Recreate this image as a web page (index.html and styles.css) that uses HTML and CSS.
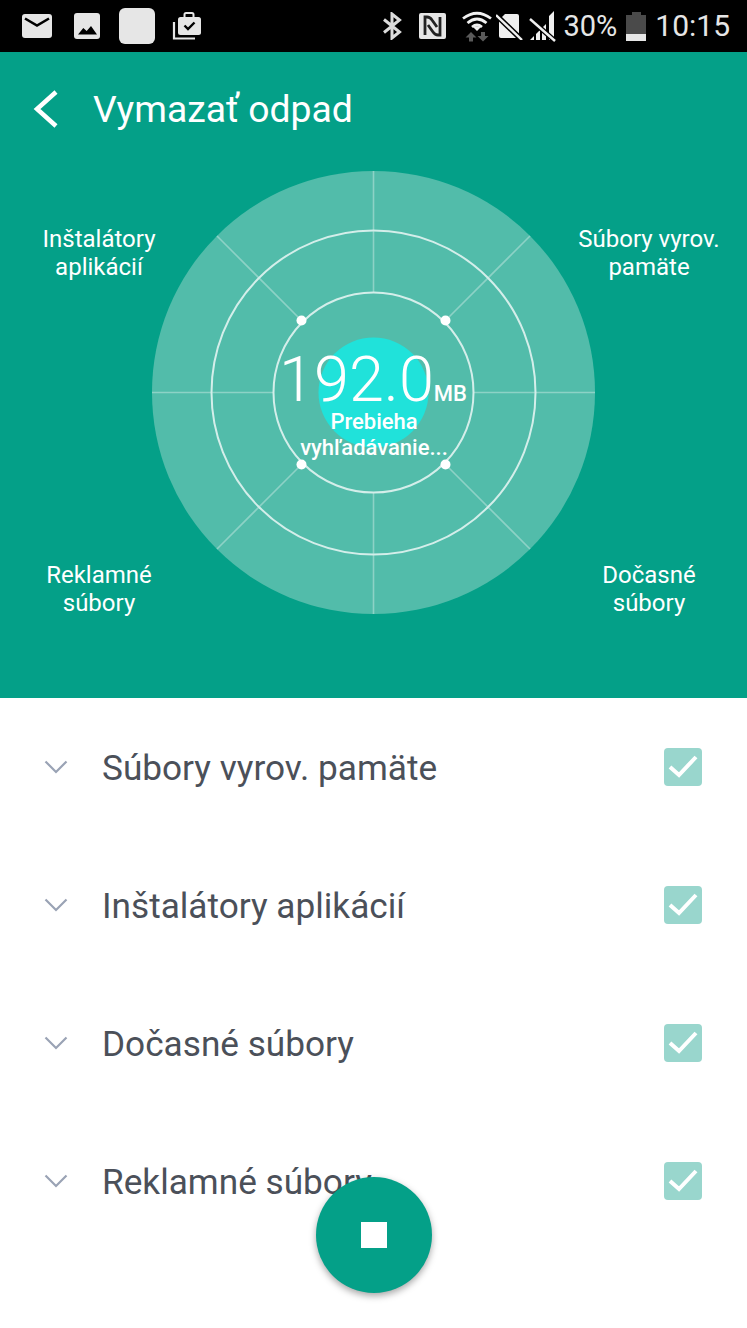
FILE: index.html
```html
<!DOCTYPE html>
<html lang="sk">
<head>
    <meta charset="UTF-8">
    <meta name="viewport" content="width=device-width, initial-scale=1.0">
    <title>Vymazať odpad</title>
    <link rel="stylesheet" href="styles.css">
</head>
<body>
    <!-- Status bar -->
    <div class="status-bar">
        <div class="status-left">
            <svg class="icon-mail" width="30" height="24" viewBox="0 0 30 24">
                <rect width="30" height="24" rx="3" fill="#e6e6e6"/>
                <path d="M3 4.500 L15 11.500 L27 4.500" fill="none" stroke="#000" stroke-width="2.600"/>
            </svg>
            <svg class="icon-photo" width="26" height="26" viewBox="0 0 26 26">
                <rect width="26" height="26" rx="3" fill="#e6e6e6"/>
                <path d="M4 21.500 L9.300 15 L12.700 18 L17 13 L23 21.500 Z" fill="#000"/>
            </svg>
            <div class="icon-blank"></div>
            <svg class="icon-work" width="31" height="31" viewBox="0 0 31 31">
                <path d="M2 11 V27.500 H23" fill="none" stroke="#e6e6e6" stroke-width="2.200"/>
                <path d="M12.500 6 V3.500 Q12.500 2 14 2 H20 Q21.500 2 21.500 3.500 V6" fill="none" stroke="#e6e6e6" stroke-width="2"/>
                <rect x="6" y="6" width="23" height="18" rx="2.500" fill="#e6e6e6"/>
                <path d="M12.500 14.500 L16 18 L22.500 11.500" fill="none" stroke="#000" stroke-width="2.400"/>
            </svg>
        </div>
        <div class="status-right">
            <svg class="icon-bt" width="20" height="28" viewBox="0 0 20 28">
                <path d="M2 7.500 L17.500 20 L10 26 V2 L17.500 8 L2 20.500" fill="none" stroke="#dcdcdc" stroke-width="3"/>
            </svg>
            <svg class="icon-nfc" width="27" height="26" viewBox="0 0 27 26">
                <rect width="27" height="26" rx="2" fill="#e6e6e6"/>
                <path d="M6 22 V4 H8 Q11 4 13 7 L18 14 M21 4 V22 H19 Q16 22 14 19 L9 12" fill="none" stroke="#222" stroke-width="2.800"/>
            </svg>
            <svg class="icon-wifi" width="30" height="31" viewBox="0 0 30 31">
                <path d="M1 7.500 Q15 -3 29 7.500 M5.500 12 Q15 4 24.500 12 M10 16 Q15 12 20 16" fill="none" stroke="#f0f0f0" stroke-width="2.800"/>
                <path d="M15 20 L11.500 16.500 Q15 14 18.500 16.500 Z" fill="#f0f0f0"/>
                <path d="M9 21 L3.500 26.500 H7 V30.500 H11 V26.500 H14.500 Z M21 30.500 L26.500 25 H23 V21 H19 V25 H15.500 Z" fill="#5a5a5a"/>
            </svg>
            <svg class="icon-sim" width="27" height="28" viewBox="0 0 27 28">
                <path d="M9 2 H21 Q23 2 23 4 V26 H5 Q3 26 3 24 V8 Z" fill="#f0f0f0"/>
                <path d="M0 3 L26 28" stroke="#000" stroke-width="5.500"/>
                <path d="M0 3 L26 28" stroke="#f0f0f0" stroke-width="2.400"/>
            </svg>
            <svg class="icon-signal" width="27" height="32" viewBox="0 0 27 32">
                <path d="M1 30 H5 V26 Z M7 30 H11 V20 L7 24 Z M13 30 H17 V14 L13 18 Z M20 30 H25 V1 L20 6 Z" fill="#f0f0f0"/>
                <path d="M1 9 L26 31" stroke="#000" stroke-width="5"/>
                <path d="M1 9 L26 31" stroke="#f0f0f0" stroke-width="2.400"/>
            </svg>
            <span class="battery-text">30%</span>
            <div class="battery">
                <div class="battery-cap"></div>
                <div class="battery-body"><div class="battery-fill"></div></div>
            </div>
            <span class="clock">10:15</span>
        </div>
    </div>

    <!-- Teal panel with radar -->
    <div class="hero">
        <div class="toolbar">
            <svg class="back" width="28" height="38" viewBox="0 0 28 38">
                <path d="M24 2 L5 19 L24 36" fill="none" stroke="#fff" stroke-width="4.500"/>
            </svg>
            <h1>Vymazať odpad</h1>
        </div>

        <svg class="radar" width="443" height="443" viewBox="-221.500 -221.500 443 443">
            <circle r="221.500" fill="#52bcaa"/>
            <g stroke="#8dd2c6" stroke-width="1.600">
                <path d="M0 -221.500 V-100 M0 100 V221.500 M-221.500 0 H-100 M100 0 H221.500"/>
                <path d="M-156.500 -156.500 L-72 -72 M156.500 -156.500 L72 -72 M-156.500 156.500 L-72 72 M156.500 156.500 L72 72"/>
            </g>
            <circle r="162" fill="none" stroke="#d4eeea" stroke-width="2"/>
            <circle r="100" fill="none" stroke="#d4eeea" stroke-width="2"/>
            <circle r="55" fill="#20e2da"/>
            <g fill="#fff">
                <circle cx="-72" cy="-72" r="5"/>
                <circle cx="72" cy="-72" r="5"/>
                <circle cx="-72" cy="72" r="5"/>
                <circle cx="72" cy="72" r="5"/>
            </g>
        </svg>

        <div class="readout">
            <div class="size"><span class="size-num">192.0</span><span class="size-unit">MB</span></div>
            <div class="readout-text">Prebieha<br>vyhľadávanie...</div>
        </div>

        <div class="label label-tl">Inštalátory<br>aplikácií</div>
        <div class="label label-tr">Súbory vyrov.<br>pamäte</div>
        <div class="label label-bl">Reklamné<br>súbory</div>
        <div class="label label-br">Dočasné<br>súbory</div>
    </div>

    <!-- Categories -->
    <div class="list">
        <div class="row">
            <svg class="chevron" width="24" height="14" viewBox="0 0 24 14"><path d="M1.500 1.500 L12 12 L22.500 1.500" fill="none" stroke="#9aa3b5" stroke-width="2.200"/></svg>
            <span class="row-name">Súbory vyrov. pamäte</span>
            <div class="check"><svg width="38" height="38" viewBox="0 0 38 38"><path d="M6 19 L15 27 L32 9" fill="none" stroke="#fff" stroke-width="4"/></svg></div>
        </div>
        <div class="row">
            <svg class="chevron" width="24" height="14" viewBox="0 0 24 14"><path d="M1.500 1.500 L12 12 L22.500 1.500" fill="none" stroke="#9aa3b5" stroke-width="2.200"/></svg>
            <span class="row-name">Inštalátory aplikácií</span>
            <div class="check"><svg width="38" height="38" viewBox="0 0 38 38"><path d="M6 19 L15 27 L32 9" fill="none" stroke="#fff" stroke-width="4"/></svg></div>
        </div>
        <div class="row">
            <svg class="chevron" width="24" height="14" viewBox="0 0 24 14"><path d="M1.500 1.500 L12 12 L22.500 1.500" fill="none" stroke="#9aa3b5" stroke-width="2.200"/></svg>
            <span class="row-name">Dočasné súbory</span>
            <div class="check"><svg width="38" height="38" viewBox="0 0 38 38"><path d="M6 19 L15 27 L32 9" fill="none" stroke="#fff" stroke-width="4"/></svg></div>
        </div>
        <div class="row">
            <svg class="chevron" width="24" height="14" viewBox="0 0 24 14"><path d="M1.500 1.500 L12 12 L22.500 1.500" fill="none" stroke="#9aa3b5" stroke-width="2.200"/></svg>
            <span class="row-name">Reklamné súbory</span>
            <div class="check"><svg width="38" height="38" viewBox="0 0 38 38"><path d="M6 19 L15 27 L32 9" fill="none" stroke="#fff" stroke-width="4"/></svg></div>
        </div>
    </div>

    <!-- Stop button -->
    <div class="fab"><div class="fab-stop"></div></div>
</body>
</html>
```
FILE: styles.css
```css
body {
    margin: 0;
    width: 747px;
    height: 1328px;
    position: relative;
    overflow: hidden;
    background: #fff;
    font-family: 'Roboto', 'Liberation Sans', sans-serif;
}

svg {
    display: block;
    flex-shrink: 0;
}

.status-bar {
    display: flex;
    justify-content: space-between;
    align-items: center;
    height: 52px;
    padding: 0 17px 0 22px;
    background: #000;
    color: #e6e6e6;
}

.status-left {
    display: flex;
    align-items: center;
}

.icon-photo {
    margin-left: 22px;
}

.icon-blank {
    width: 36px;
    height: 36px;
    margin-left: 19px;
    border-radius: 6px;
    background: #e6e6e6;
}

.icon-work {
    margin-left: 17px;
}

.status-right {
    display: flex;
    align-items: center;
}

.icon-nfc {
    margin-left: 17px;
}

.icon-wifi {
    margin-left: 16px;
}

.icon-sim {
    margin-left: 4px;
}

.icon-signal {
    margin-left: 6px;
}

.battery-text {
    margin-left: 7px;
    font-size: 29px;
    line-height: 52px;
}

.battery {
    display: flex;
    flex-direction: column;
    align-items: center;
    margin-left: 9px;
}

.battery-cap {
    width: 9px;
    height: 3px;
    background: #4a4a4a;
}

.battery-body {
    display: flex;
    align-items: flex-end;
    width: 20px;
    height: 26px;
    background: #4a4a4a;
}

.battery-fill {
    width: 100%;
    height: 7px;
    background: #e6e6e6;
}

.clock {
    margin-left: 9px;
    font-size: 30px;
    line-height: 52px;
}

.hero {
    position: relative;
    height: 646px;
    background: #04a088;
    color: #fff;
}

.toolbar {
    display: flex;
    align-items: center;
    height: 113px;
    padding-left: 32px;
}

.back {
    margin-right: 33px;
}

h1 {
    margin: 0;
    font-size: 37.300px;
    font-weight: 400;
}

.radar {
    position: absolute;
    left: 152px;
    top: 119px;
}

.readout {
    position: absolute;
    left: 224px;
    top: 291px;
    width: 300px;
    text-align: center;
}

.size {
    display: flex;
    justify-content: center;
    align-items: baseline;
    height: 66px;
}

.size-num {
    font-size: 63px;
    font-weight: 300;
    line-height: 74px;
}

.size-unit {
    margin-right: 2px;
    font-size: 22px;
    font-weight: 500;
}

.readout-text {
    font-size: 22px;
    font-weight: 500;
    line-height: 26px;
}

.label {
    position: absolute;
    width: 170px;
    font-size: 24px;
    line-height: 28px;
    text-align: center;
}

.label-tl {
    left: 14px;
    top: 173px;
}

.label-tr {
    left: 564px;
    top: 173px;
}

.label-bl {
    left: 14px;
    top: 509px;
}

.label-br {
    left: 564px;
    top: 509px;
}

.row {
    display: flex;
    align-items: center;
    height: 138px;
    padding: 0 45px 0 44px;
}

.row-name {
    flex: 1;
    margin-left: 34px;
    margin-top: 2px;
    font-size: 35.200px;
    color: #4b5059;
}

.check {
    width: 38px;
    height: 38px;
    margin-top: -1px;
    border-radius: 4px;
    background: #99d6cd;
}

.chevron {
    margin-top: -1px;
}

.fab {
    position: absolute;
    left: 315.500px;
    top: 1177px;
    display: flex;
    justify-content: center;
    align-items: center;
    width: 116px;
    height: 116px;
    border-radius: 50%;
    background: #04a088;
    box-shadow: 0 3px 7px rgba(0,0,0,0.35);
}

.fab-stop {
    width: 26px;
    height: 26px;
    background: #fff;
}
```
